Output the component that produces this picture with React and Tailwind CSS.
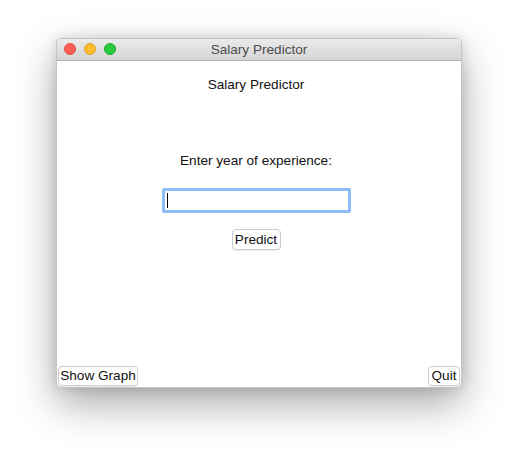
export default function App() {
  return (
    <div className="w-[518px] h-[462px] bg-white pt-[38px] pl-[56px] font-['Liberation_Sans',Arial,sans-serif]">
      <div className="w-[406px] h-[350px] flex flex-col rounded-[5px] border border-[#c4c4c4] bg-white overflow-hidden shadow-[0_16px_40px_rgba(0,0,0,0.34),0_0_12px_rgba(0,0,0,0.14)]">
        {/* title bar */}
        <div className="relative h-[22px] flex items-center justify-center bg-gradient-to-b from-[#ebebeb] to-[#d5d5d5] border-b border-[#b1b1b1]">
          <div className="absolute left-[7px] top-[4px] flex gap-[8px]">
            <span className="w-[12px] h-[12px] rounded-full bg-[#fe5f57] border border-[#e2463f]" />
            <span className="w-[12px] h-[12px] rounded-full bg-[#febc2e] border border-[#dea123]" />
            <span className="w-[12px] h-[12px] rounded-full bg-[#28c840] border border-[#1aab29]" />
          </div>
          <span className="text-[13.6px] leading-none text-[#4d4d4d]">Salary Predictor</span>
        </div>

        {/* body */}
        <div className="flex-1 flex flex-col">
          <div className="flex flex-col items-center pr-[6px] text-[13.6px] text-[#111]">
            <div className="mt-[16px] h-[16px] leading-[16px]">Salary Predictor</div>
            <div className="mt-[60px] h-[16px] leading-[16px]">Enter year of experience:</div>
            <div className="mt-[19px] w-[189px] h-[25px] rounded-[2px] border-[3px] border-[#8fbcf6] bg-white flex items-center pl-[2px]">
              <span className="w-[1px] h-[15px] bg-black" />
            </div>
            <button className="mt-[16px] w-[49px] h-[21px] rounded-[4px] border border-[#cdcdcd] bg-white text-[13.6px] leading-none text-[#111] shadow-[0_1px_1px_rgba(0,0,0,0.08)]">
              Predict
            </button>
          </div>
          <div className="flex-1" />
          <div className="flex justify-between items-end px-[1px] pb-[1px]">
            <button className="w-[80px] h-[20px] rounded-[4px] border border-[#cdcdcd] bg-white text-[13.6px] leading-none text-[#111] shadow-[0_1px_1px_rgba(0,0,0,0.08)]">
              Show Graph
            </button>
            <button className="w-[32px] h-[20px] rounded-[4px] border border-[#cdcdcd] bg-white text-[13.6px] leading-none text-[#111] shadow-[0_1px_1px_rgba(0,0,0,0.08)]">
              Quit
            </button>
          </div>
        </div>
      </div>
    </div>
  )
}
